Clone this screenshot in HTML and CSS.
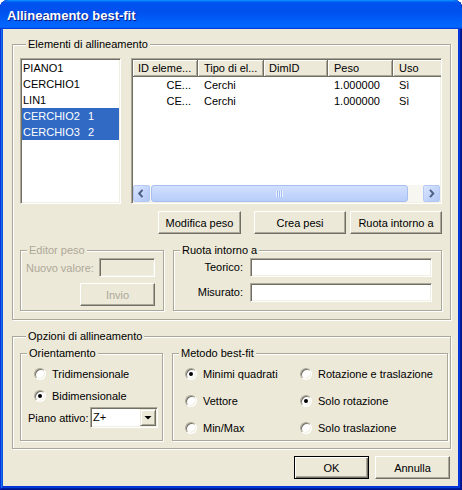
FILE: index.html
```html
<!DOCTYPE html>
<html>
<head>
<meta charset="utf-8">
<title>Allineamento best-fit</title>
<link rel="stylesheet" href="styles.css">
</head>
<body>
<div class="window">
  <div class="titlebar">Allineamento best-fit</div>
  <div class="client">
    <div class="group g1">
      <div class="gtitle">Elementi di allineamento</div>
      <div class="lists">
        <div class="listbox field">
          <div class="li">PIANO1</div>
          <div class="li">CERCHIO1</div>
          <div class="li">LIN1</div>
          <div class="li sel"><span class="nm">CERCHIO2</span>1</div>
          <div class="li sel"><span class="nm">CERCHIO3</span>2</div>
        </div>
        <div class="listview field">
          <div class="lv-head">
            <div class="hc c1">ID eleme...</div>
            <div class="hc c2">Tipo di el...</div>
            <div class="hc c3">DimID</div>
            <div class="hc c4">Peso</div>
            <div class="hc c5">Uso</div>
          </div>
          <div class="lv-body">
            <div class="lv-row">
              <div class="cell c1 right">CE...</div>
              <div class="cell c2">Cerchi</div>
              <div class="cell c3"></div>
              <div class="cell c4">1.000000</div>
              <div class="cell c5">Sì</div>
            </div>
            <div class="lv-row">
              <div class="cell c1 right">CE...</div>
              <div class="cell c2">Cerchi</div>
              <div class="cell c3"></div>
              <div class="cell c4">1.000000</div>
              <div class="cell c5">Sì</div>
            </div>
          </div>
          <div class="hscroll">
            <div class="sbtn"><svg width="15" height="15" viewBox="0 0 15 15"><path d="M8.5 3.8 L5.2 7.5 L8.5 11.2" fill="none" stroke="#4D6185" stroke-width="2"/></svg></div>
            <div class="thumb"><span class="grip"></span></div>
            <div class="track"></div>
            <div class="sbtn"><svg width="15" height="15" viewBox="0 0 15 15"><path d="M6 3.8 L9.3 7.5 L6 11.2" fill="none" stroke="#4D6185" stroke-width="2"/></svg></div>
          </div>
        </div>
      </div>
      <div class="btnrow">
        <div class="btn b-mod">Modifica peso</div>
        <div class="btn b-crea">Crea pesi</div>
        <div class="btn b-ruota">Ruota intorno a</div>
      </div>
      <div class="subrow">
        <div class="group editor disabled">
          <div class="gtitle">Editor peso</div>
          <div class="ed-row"><span>Nuovo valore:</span><div class="field ed-input"></div></div>
          <div class="ed-btnrow"><div class="btn b-invio">Invio</div></div>
        </div>
        <div class="group ruota">
          <div class="gtitle">Ruota intorno a</div>
          <div class="rform">
            <span class="rlabel">Teorico:</span><div class="field rin"></div>
            <span class="rlabel">Misurato:</span><div class="field rin"></div>
          </div>
        </div>
      </div>
    </div>

    <div class="group g2">
      <div class="gtitle">Opzioni di allineamento</div>
      <div class="subrow2">
        <div class="group orient">
          <div class="gtitle">Orientamento</div>
          <div class="ropt"><span class="radio"></span>Tridimensionale</div>
          <div class="ropt"><span class="radio on"></span>Bidimensionale</div>
          <div class="piano">
            <span class="plabel">Piano attivo:</span>
            <div class="combo field">
              <span class="ctext">Z+</span>
              <div class="cbtn"><svg width="14" height="15" viewBox="0 0 14 15"><polygon points="3.5,6 10.5,6 7,9.5" fill="#000"/></svg></div>
            </div>
          </div>
        </div>
        <div class="group metodo">
          <div class="gtitle">Metodo best-fit</div>
          <div class="mgrid">
            <div class="ropt2"><span class="radio on"></span>Minimi quadrati</div>
            <div class="ropt2"><span class="radio"></span>Rotazione e traslazione</div>
            <div class="ropt2"><span class="radio"></span>Vettore</div>
            <div class="ropt2"><span class="radio on"></span>Solo rotazione</div>
            <div class="ropt2"><span class="radio"></span>Min/Max</div>
            <div class="ropt2"><span class="radio"></span>Solo traslazione</div>
          </div>
        </div>
      </div>
    </div>

    <div class="footer">
      <div class="btn default">OK</div>
      <div class="btn">Annulla</div>
    </div>
  </div>
</div>
</body>
</html>
```
FILE: styles.css
```css
* { box-sizing: border-box; }
html, body { margin: 0; padding: 0; background: #fff; }
body {
  font-family: "Liberation Sans", Arial, sans-serif;
  font-size: 11px;
  color: #000;
}

.window {
  width: 462px;
  height: 490px;
  display: flex;
  flex-direction: column;
  background: #0831d9;
  border-radius: 8px 8px 0 0;
  padding: 0 4px 4px 3px;
  overflow: hidden;
  box-shadow: inset -1px -1px #00138c, inset 1px 1px #0831d9, inset -2px -2px #001ea0,
              inset 2px 2px #166aee, inset -3px -3px #003bda, inset 3px 3px #0855dd;
}

.titlebar {
  height: 29px;
  margin: 0 -4px 0 -3px;
  border-radius: 8px 8px 0 0;
  background: linear-gradient(180deg, #0997ff 0%, #0053ee 8%, #0050ee 40%, #0066ff 88%, #0066ff 93%, #005bff 95%, #003dd7 96%, #003dd7 100%);
  padding: 3px 0 0 7px;
  font: bold 13px/26px "Liberation Sans", Arial, sans-serif;
  color: #fff;
  text-shadow: 1px 1px #0a1883;
}

.client {
  flex: 1;
  background: #ECE9D8;
  padding: 15px 7px 0 9px;
  display: flex;
  flex-direction: column;
}

/* group boxes */
.group {
  border: 1px solid #ACA899;
  box-shadow: inset 1px 1px #fff, 1px 1px #fff;
}
.gtitle {
  margin: -7px 0 0 6px;
  padding: 0 2px;
  line-height: 13px;
  background: #ECE9D8;
  width: max-content;
}
.disabled, .disabled .btn { color: #ACA899; }

/* sunken field */
.field {
  background: #fff;
  border: 1px solid;
  border-color: #ACA899 #fff #fff #ACA899;
  box-shadow: inset 1px 1px #716F64, inset -1px -1px #F1EFE2;
  padding: 1px;
}

/* buttons */
.btn {
  height: 23px;
  width: 75px;
  background: #ECE9D8;
  border: 1px solid;
  border-color: #fff #716F64 #716F64 #fff;
  box-shadow: inset -1px -1px #ACA899;
  display: flex;
  align-items: center;
  justify-content: center;
  white-space: nowrap;
}
.btn.default {
  border: 1px solid #000;
  box-shadow: inset 1px 1px #fff, inset -1px -1px #716F64, inset -2px -2px #ACA899;
}

/* group 1 */
.g1 {
  height: 276px;
  padding: 0 8px 8px 7px;
  display: flex;
  flex-direction: column;
}
.lists {
  margin-top: 7px;
  display: flex;
  gap: 10px;
  height: 146px;
}
.listbox { width: 101px; height: 146px; }
.li { height: 16px; line-height: 16px; padding-left: 1px; white-space: nowrap; }
.li.sel { background: #316AC5; color: #fff; }
.nm { display: inline-block; width: 65px; }

.listview {
  width: 311px;
  height: 146px;
  display: flex;
  flex-direction: column;
  overflow: hidden;
}
.lv-head { display: flex; height: 17px; flex: none; }
.hc {
  height: 17px;
  line-height: 16px;
  padding-left: 5px;
  background: #ECE9D8;
  border-right: 1px solid #716F64;
  border-bottom: 1px solid #716F64;
  box-shadow: inset 1px 1px #fff, inset -1px -1px #ACA899;
  white-space: nowrap;
  overflow: hidden;
  flex: none;
}
.c1 { width: 65px; }
.c2 { width: 66px; }
.c3 { width: 64px; }
.c4 { width: 65px; }
.c5 { width: 60px; }
.hc.c2, .hc.c4, .hc.c5 { padding-left: 6px; }
.lv-body { flex: 1; }
.lv-row { display: flex; height: 16px; line-height: 16px; }
.cell { flex: none; padding: 0 6px; white-space: nowrap; overflow: hidden; }
.cell.right { text-align: right; padding-right: 7px; }

.hscroll {
  display: flex;
  height: 17px;
  flex: none;
  background: #F7F6F1;
}
.sbtn {
  width: 17px;
  height: 17px;
  flex: none;
  border: 1px solid #B6C9F4;
  border-radius: 2px;
  background: linear-gradient(135deg, #DCE6FE 0%, #C2D4FB 55%, #B2C7F4 100%);
  display: flex;
  align-items: center;
  justify-content: center;
}
.thumb {
  width: 257px;
  margin-left: 1px;
  height: 17px;
  flex: none;
  border: 1px solid #A7BEF1;
  border-radius: 3px;
  background: linear-gradient(180deg, #D3E0FD 0%, #C4D6FC 50%, #B8CDF9 100%);
  display: flex;
  align-items: center;
  justify-content: center;
}
.grip {
  width: 7px;
  height: 6px;
  background: repeating-linear-gradient(90deg, #EEF3FE 0 1px, #9DB8F3 1px 2px);
}
.track { width: 15px; flex: none; }

.btnrow {
  margin-top: 7px;
  display: flex;
  justify-content: flex-end;
}
.b-mod { width: 83px; margin-right: 13px; }
.b-crea { width: 92px; margin-right: 4px; }
.b-ruota { width: 92px; }

.subrow {
  margin-top: 16px;
  display: flex;
  gap: 9px;
}
.editor { width: 144px; padding-bottom: 4px; }
.ed-row {
  margin-top: 1px;
  display: flex;
  align-items: center;
  justify-content: space-between;
  padding: 0 8px 0 5px;
}
.ed-input { width: 56px; height: 19px; background: #ECE9D8; }
.ed-btnrow {
  margin-top: 6px;
  display: flex;
  justify-content: flex-end;
  padding-right: 8px;
}
.b-invio { width: 75px; }

.ruota { width: 269px; }
.rform {
  margin-top: 1px;
  display: grid;
  grid-template-columns: 1fr 182px;
  column-gap: 7px;
  row-gap: 6px;
  padding-right: 9px;
}
.rlabel { text-align: right; line-height: 19px; }
.rin { height: 19px; }

/* group 2 */
.g2 {
  margin-top: 16px;
  height: 113px;
  padding: 0 2px 7px 7px;
}
.subrow2 {
  margin-top: 10px;
  display: flex;
  gap: 9px;
  height: 88px;
}
.orient { width: 143px; }
.ropt {
  display: flex;
  align-items: center;
  gap: 6px;
  height: 16px;
  margin-top: 6px;
  padding-left: 13px;
  white-space: nowrap;
}
.radio {
  width: 12px;
  height: 12px;
  flex: none;
  border-radius: 50%;
  border: 1px solid;
  border-color: #ACA899 #fff #fff #ACA899;
  background: #fff;
  box-shadow: inset 1px 1px #716F64, inset -1px -1px #F1EFE2;
  display: flex;
  align-items: center;
  justify-content: center;
}
.radio.on::after {
  content: "";
  width: 4px;
  height: 4px;
  border-radius: 50%;
  background: #000;
}
.piano {
  margin-top: 3px;
  display: flex;
  align-items: center;
  padding-left: 7px;
}
.plabel { width: 62px; white-space: nowrap; }
.combo {
  width: 68px;
  height: 21px;
  display: flex;
  align-items: stretch;
}
.ctext { flex: 1; line-height: 17px; padding-left: 1px; }
.cbtn {
  width: 16px;
  flex: none;
  background: #ECE9D8;
  border: 1px solid;
  border-color: #ECE9D8 #716F64 #716F64 #ECE9D8;
  box-shadow: inset 1px 1px #fff, inset -1px -1px #ACA899;
  display: flex;
  align-items: center;
  justify-content: center;
}

.metodo { flex: 1; }
.mgrid {
  margin-top: 6px;
  display: grid;
  grid-template-columns: 115px auto;
  row-gap: 11px;
  padding-left: 12px;
}
.ropt2 {
  display: flex;
  align-items: center;
  gap: 6px;
  height: 16px;
  white-space: nowrap;
}

.footer {
  margin-top: 7px;
  display: flex;
  justify-content: flex-end;
  gap: 6px;
  padding-right: 1px;
}
```
